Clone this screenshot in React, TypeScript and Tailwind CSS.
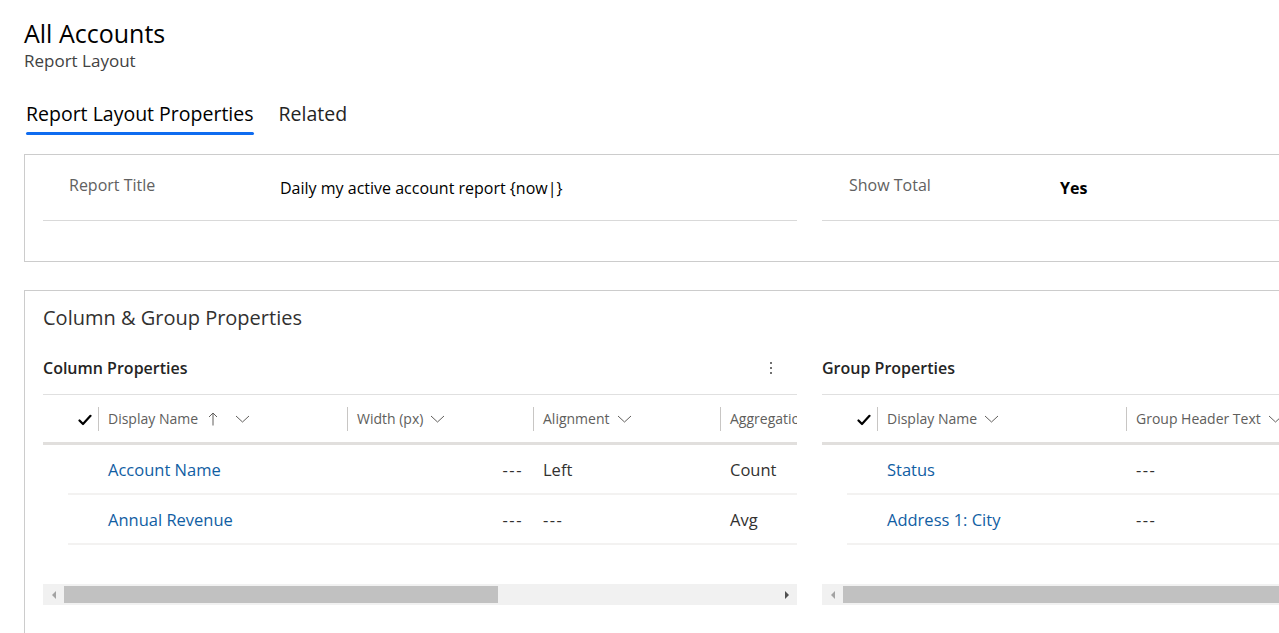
import React from 'react';

const font = { fontFamily: '"Open Sans", "Noto Sans", sans-serif' };

const Check = () => (
  <svg width="14" height="12" viewBox="0 0 14 12" className="text-black">
    <path d="M1.5 6.5 L5 10 L12.5 1.8" fill="none" stroke="currentColor" strokeWidth="2.2" strokeLinecap="round" strokeLinejoin="round" />
  </svg>
);

const Chevron = () => (
  <svg width="15" height="8" viewBox="0 0 15 8" className="text-[#605e5c]">
    <path d="M1 1 L7.5 7 L14 1" fill="none" stroke="currentColor" strokeWidth="1" />
  </svg>
);

const UpArrow = () => (
  <svg width="10" height="14" viewBox="0 0 10 14" className="text-[#605e5c]">
    <path d="M5 13.5 V1 M1 5 L5 1 L9 5" fill="none" stroke="currentColor" strokeWidth="1" />
  </svg>
);

type Col = { label: string; width: string; sort?: boolean };

const HeaderCell = ({ col }: { col: Col }) => (
  <div className={`${col.width} shrink-0 flex items-center h-full`}>
    <div className="w-px h-6 bg-[#c8c6c4]" />
    <span className="pl-[9px] text-[14px] text-[#605e5c] whitespace-nowrap flex items-center gap-[7px]">
      {col.label}
      {col.sort && <span className="ml-[3px] mr-[10px]"><UpArrow /></span>}
      <Chevron />
    </span>
  </div>
);

const Scrollbar = ({ thumb }: { thumb: string }) => (
  <div className="mt-[39px] h-[21px] bg-[#f1f1f1] flex items-center">
    <div className="w-[21px] h-full flex items-center justify-center">
      <div className="w-0 h-0 border-y-[4px] border-y-transparent border-r-[4px] border-r-[#a3a3a3]" />
    </div>
    <div className={`${thumb} h-[17px] bg-[#c1c1c1]`} />
    <div className="flex-1" />
    <div className="w-[21px] h-full flex items-center justify-center">
      <div className="w-0 h-0 border-y-[4px] border-y-transparent border-l-[4px] border-l-[#505050]" />
    </div>
  </div>
);

type Row = { name: string; cells: React.ReactNode };

const Dash = () => <span className="tracking-[1.5px]">---</span>;

const Grid = ({
  title,
  cols,
  rows,
  kebab,
  thumb,
}: {
  title: string;
  cols: Col[];
  rows: Row[];
  kebab?: boolean;
  thumb: string;
}) => (
  <div className="w-[754px] shrink-0">
    <div className="h-[55px] flex items-center justify-between border-b border-[#e0e0e0]">
      <span className="text-[16px] font-semibold text-[#242424] pt-[2px]">{title}</span>
      {kebab && (
        <div className="mr-[25px] flex flex-col gap-[3px] items-center pt-[1px]">
          <span className="w-[2px] h-[2px] bg-[#424242] rounded-full" />
          <span className="w-[2px] h-[2px] bg-[#424242] rounded-full" />
          <span className="w-[2px] h-[2px] bg-[#424242] rounded-full" />
        </div>
      )}
    </div>
    <div className="overflow-hidden">
      <div className="h-[50px] flex items-center border-b-[3px] border-[#e1dfdd] w-[1000px]">
        <div className="w-[55px] shrink-0 flex justify-end pr-[6px] pt-[2px]">
          <Check />
        </div>
        {cols.map((c) => (
          <HeaderCell key={c.label} col={c} />
        ))}
      </div>
      {rows.map((r) => (
        <div key={r.name} className="ml-[25px] h-[50px] pt-[3px] flex items-center border-b-2 border-[#f3f2f1] text-[16.5px]">
          <div className="w-[30px] shrink-0" />
          <div className="w-[249px] shrink-0 pl-[10px] text-[#115ea3] whitespace-nowrap">{r.name}</div>
          {r.cells}
        </div>
      ))}
    </div>
    <Scrollbar thumb={thumb} />
  </div>
);

export default function App() {
  return (
    <div className="w-[1279px] h-[633px] overflow-hidden bg-white" style={font}>
      <div className="w-[1640px] pl-6 pt-[17px]">
        <h1 className="text-[25px] leading-8 text-black">All Accounts</h1>
        <div className="text-[17px] leading-5 text-[#424242] mt-[2px]">Report Layout</div>

        <div className="mt-[29px] flex gap-[25px] pl-[2px]">
          <div className="flex flex-col items-stretch">
            <span className="text-[19.5px] leading-7 text-black">Report Layout Properties</span>
            <span className="mt-[4px] h-[3px] rounded-full bg-[#0f6cf0]" />
          </div>
          <span className="text-[19.5px] leading-7 text-[#242424]">Related</span>
        </div>

        <section className="mt-[19px] border border-[#cccccc] h-[108px] pl-[18px] flex gap-[25px]">
          <div className="w-[754px] shrink-0 h-[66px] border-b border-[#d9d9d9] flex items-start pt-[18px]">
            <span className="w-[237px] shrink-0 pl-[26px] text-[16px] text-[#616161]">Report Title</span>
            <span className="text-[16px] text-black mt-[3px]">Daily my active account report {'{now|}'}</span>
          </div>
          <div className="w-[754px] shrink-0 h-[66px] border-b border-[#d9d9d9] flex items-start pt-[18px]">
            <span className="w-[238px] shrink-0 pl-[27px] text-[16px] text-[#616161]">Show Total</span>
            <span className="text-[16px] text-black font-bold mt-[3px]">Yes</span>
          </div>
        </section>

        <section className="mt-[28px] border border-[#cccccc] h-[400px] pl-[18px]">
          <h2 className="pt-[11px] text-[20px] leading-8 text-[#323130]">Column &amp; Group Properties</h2>
          <div className="mt-[6px] flex gap-[25px]">
            <Grid
              title="Column Properties"
              kebab
              thumb="w-[434px]"
              cols={[
                { label: 'Display Name', width: 'w-[249px]', sort: true },
                { label: 'Width (px)', width: 'w-[186px]' },
                { label: 'Alignment', width: 'w-[187px]' },
                { label: 'Aggregation', width: 'w-[200px]' },
              ]}
              rows={[
                {
                  name: 'Account Name',
                  cells: (
                    <>
                      <div className="w-[186px] shrink-0 text-right pr-[10px] text-[#323130]"><Dash /></div>
                      <div className="w-[187px] shrink-0 pl-[10px] text-[#323130]">Left</div>
                      <div className="pl-[10px] text-[#323130]">Count</div>
                    </>
                  ),
                },
                {
                  name: 'Annual Revenue',
                  cells: (
                    <>
                      <div className="w-[186px] shrink-0 text-right pr-[10px] text-[#323130]"><Dash /></div>
                      <div className="w-[187px] shrink-0 pl-[10px] text-[#323130]"><Dash /></div>
                      <div className="pl-[10px] text-[#323130]">Avg</div>
                    </>
                  ),
                },
              ]}
            />
            <Grid
              title="Group Properties"
              thumb="w-[700px]"
              cols={[
                { label: 'Display Name', width: 'w-[249px]' },
                { label: 'Group Header Text', width: 'w-[250px]' },
              ]}
              rows={[
                { name: 'Status', cells: <div className="pl-[10px] text-[#323130]"><Dash /></div> },
                { name: 'Address 1: City', cells: <div className="pl-[10px] text-[#323130]"><Dash /></div> },
              ]}
            />
          </div>
        </section>
      </div>
    </div>
  );
}
